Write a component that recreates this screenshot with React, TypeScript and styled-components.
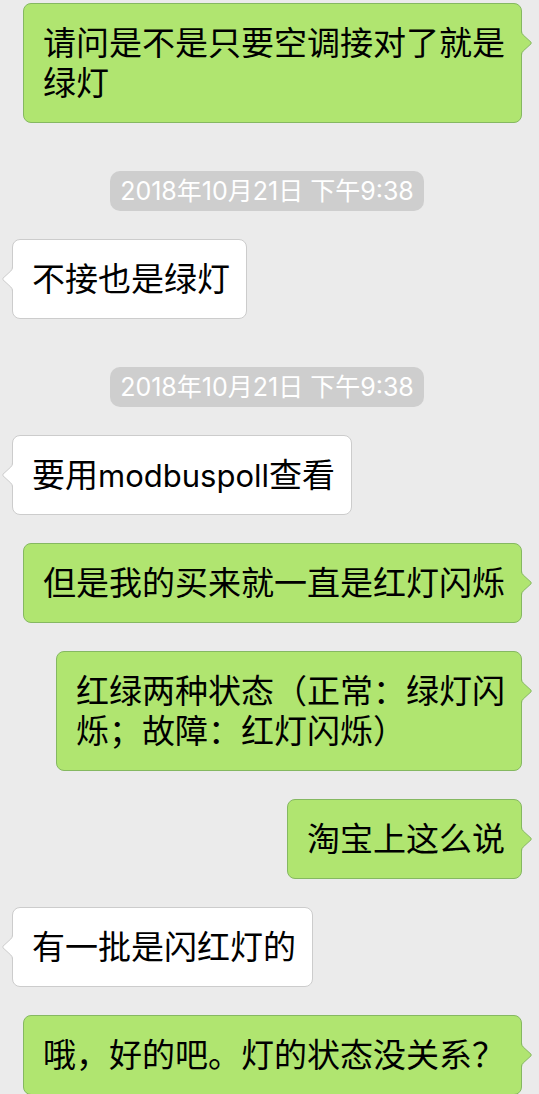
import React from "react";
import styled, { createGlobalStyle } from "styled-components";

type Side = "sent" | "received";

type Entry =
  | { kind: "time"; text: string }
  | { kind: "message"; side: Side; text: string };

const palette = {
  sent: { fill: "#b0e570", line: "#85b861" },
  received: { fill: "#ffffff", line: "#cccccc" },
};

const GlobalStyle = createGlobalStyle`
  html {
    scrollbar-width: none;
  }
  body {
    margin: 0;
    background: #ebebeb;
    font-family: Inter, "Noto Sans CJK SC", sans-serif;
  }
`;

const Chat = styled.main`
  box-sizing: border-box;
  min-height: 100vh;
  padding: 3px 17px 0 12px;
`;

const Thread = styled.ol`
  display: flex;
  flex-direction: column;
  gap: 28px;
  margin: 0;
  padding: 0;
  list-style: none;
`;

const TimeRow = styled.li`
  display: flex;
  justify-content: center;
  padding-top: 20px;
`;

const Stamp = styled.time`
  padding: 0 10px;
  border-radius: 10px;
  background: #cecece;
  color: #ffffff;
  font-size: 25px;
  line-height: 40px;
  white-space: nowrap;
`;

const MessageRow = styled.li<{ $side: Side }>`
  display: flex;
  justify-content: ${({ $side }) => ($side === "sent" ? "flex-end" : "flex-start")};
`;

const Bubble = styled.div<{ $side: Side }>`
  position: relative;
  padding: 19px 16px 19px 19px;
  border: 1px solid ${({ $side }) => palette[$side].line};
  border-radius: 8px;
  background: ${({ $side }) => palette[$side].fill};
`;

const Message = styled.p`
  margin: 0;
  color: #000000;
  font-size: 33px;
  line-height: 40px;
  white-space: pre-line;
`;

const Latin = styled.span`
  font-size: 31px;
  line-height: 1;
`;

const Pointer = styled.svg<{ $side: Side }>`
  position: absolute;
  top: 27px;
  ${({ $side }) => ($side === "sent" ? "left: 100%;" : "right: 100%; transform: scaleX(-1);")}
`;

const entries: Entry[] = [
  { kind: "message", side: "sent", text: "请问是不是只要空调接对了就是\n绿灯" },
  { kind: "time", text: "2018年10月21日 下午9:38" },
  { kind: "message", side: "received", text: "不接也是绿灯" },
  { kind: "time", text: "2018年10月21日 下午9:38" },
  { kind: "message", side: "received", text: "要用modbuspoll查看" },
  { kind: "message", side: "sent", text: "但是我的买来就一直是红灯闪烁" },
  { kind: "message", side: "sent", text: "红绿两种状态（正常：绿灯闪\n烁；故障：红灯闪烁）" },
  { kind: "message", side: "sent", text: "淘宝上这么说" },
  { kind: "message", side: "received", text: "有一批是闪红灯的" },
  { kind: "message", side: "sent", text: "哦，好的吧。灯的状态没关系？" },
];

// Latin words are set slightly smaller than the Chinese text around them.
function withLatin(text: string) {
  return text
    .split(/([A-Za-z]+)/)
    .map((part, index) => (index % 2 === 1 ? <Latin key={index}>{part}</Latin> : part));
}

function Tail({ side }: { side: Side }) {
  const { fill, line } = palette[side];
  return (
    <Pointer $side={side} width="11" height="24" viewBox="0 0 11 24" aria-hidden="true">
      <path d="M0 0 Q0.5 2.5 2.2 4 L10 11.2 Q10.6 12 10 12.8 L2.2 20 Q0.5 21.5 0 24 Z" fill={fill} />
      <path
        d="M0.5 0 Q0.5 2.5 2.2 4 L10 11.2 Q10.6 12 10 12.8 L2.2 20 Q0.5 21.5 0.5 24"
        fill="none"
        stroke={line}
      />
    </Pointer>
  );
}

export default function App() {
  return (
    <>
      <GlobalStyle />
      <Chat>
        <Thread>
          {entries.map((entry, index) =>
            entry.kind === "time" ? (
              <TimeRow key={index}>
                <Stamp dateTime="2018-10-21T21:38">{entry.text}</Stamp>
              </TimeRow>
            ) : (
              <MessageRow key={index} $side={entry.side}>
                <Bubble $side={entry.side}>
                  <Message lang="zh-CN">{withLatin(entry.text)}</Message>
                  <Tail side={entry.side} />
                </Bubble>
              </MessageRow>
            )
          )}
        </Thread>
      </Chat>
    </>
  );
}
